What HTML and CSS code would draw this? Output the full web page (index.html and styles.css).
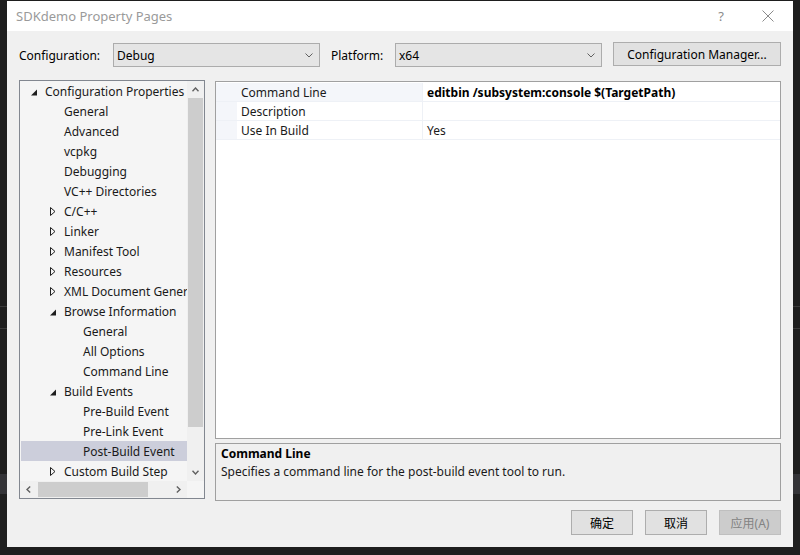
FILE: index.html
```html
<!DOCTYPE html>
<html>
<head>
<meta charset="utf-8">
<link rel="stylesheet" href="styles.css">
</head>
<body>
<div class="window">
  <div class="titlebar">
    <span class="title">SDKdemo Property Pages</span>
    <span class="help">?</span>
    <svg class="close" width="12" height="12" viewBox="0 0 12 12"><path d="M0.5 0.5L11.5 11.5M11.5 0.5L0.5 11.5" stroke="#8a8a8a" stroke-width="1" fill="none"/></svg>
  </div>
  <div class="body">
    <div class="config-row">
      <span class="lbl lbl-cfg">Configuration:</span>
      <div class="select"><span>Debug</span><svg class="chev" width="8" height="5" viewBox="0 0 8 5"><path d="M0.5 0.5L4 4L7.5 0.5" stroke="#606060" fill="none"/></svg></div>
      <span class="lbl lbl-plat">Platform:</span>
      <div class="select"><span>x64</span><svg class="chev" width="8" height="5" viewBox="0 0 8 5"><path d="M0.5 0.5L4 4L7.5 0.5" stroke="#606060" fill="none"/></svg></div>
      <div class="btn btn-mgr">Configuration Manager...</div>
    </div>
    <div class="main">
      <div class="tree">
        <div class="tree-top">
          <div class="tree-rows">
            <div class="row l0"><svg class="tw" width="6" height="9" viewBox="0 0 6 9"><path d="M6 2.5L6 8.5L0 8.5Z" fill="#1e1e1e"/></svg>Configuration Properties</div>
            <div class="row l1"><span class="tw"></span>General</div>
            <div class="row l1"><span class="tw"></span>Advanced</div>
            <div class="row l1"><span class="tw"></span>vcpkg</div>
            <div class="row l1"><span class="tw"></span>Debugging</div>
            <div class="row l1"><span class="tw"></span>VC++ Directories</div>
            <div class="row l1"><svg class="tw" width="6" height="9" viewBox="0 0 6 9"><path d="M0.5 0.5L5 4.5L0.5 8.5Z" stroke="#1e1e1e" stroke-width="1" fill="none" stroke-linejoin="miter"/></svg>C/C++</div>
            <div class="row l1"><svg class="tw" width="6" height="9" viewBox="0 0 6 9"><path d="M0.5 0.5L5 4.5L0.5 8.5Z" stroke="#1e1e1e" stroke-width="1" fill="none"/></svg>Linker</div>
            <div class="row l1"><svg class="tw" width="6" height="9" viewBox="0 0 6 9"><path d="M0.5 0.5L5 4.5L0.5 8.5Z" stroke="#1e1e1e" stroke-width="1" fill="none"/></svg>Manifest Tool</div>
            <div class="row l1"><svg class="tw" width="6" height="9" viewBox="0 0 6 9"><path d="M0.5 0.5L5 4.5L0.5 8.5Z" stroke="#1e1e1e" stroke-width="1" fill="none"/></svg>Resources</div>
            <div class="row l1"><svg class="tw" width="6" height="9" viewBox="0 0 6 9"><path d="M0.5 0.5L5 4.5L0.5 8.5Z" stroke="#1e1e1e" stroke-width="1" fill="none"/></svg>XML Document Generator</div>
            <div class="row l1"><svg class="tw" width="6" height="9" viewBox="0 0 6 9"><path d="M6 2.5L6 8.5L0 8.5Z" fill="#1e1e1e"/></svg>Browse Information</div>
            <div class="row l2"><span class="tw"></span>General</div>
            <div class="row l2"><span class="tw"></span>All Options</div>
            <div class="row l2"><span class="tw"></span>Command Line</div>
            <div class="row l1"><svg class="tw" width="6" height="9" viewBox="0 0 6 9"><path d="M6 2.5L6 8.5L0 8.5Z" fill="#1e1e1e"/></svg>Build Events</div>
            <div class="row l2"><span class="tw"></span>Pre-Build Event</div>
            <div class="row l2"><span class="tw"></span>Pre-Link Event</div>
            <div class="row l2 sel"><span class="tw"></span>Post-Build Event</div>
            <div class="row l1"><svg class="tw" width="6" height="9" viewBox="0 0 6 9"><path d="M0.5 0.5L5 4.5L0.5 8.5Z" stroke="#1e1e1e" stroke-width="1" fill="none"/></svg>Custom Build Step</div>
          </div>
          <div class="vscroll">
            <div class="sb-btn"><svg width="7" height="5" viewBox="0 0 7 5"><path d="M0.5 4.2L3.5 1L6.5 4.2" stroke="#606060" stroke-width="1.4" fill="none"/></svg></div>
            <div class="vtrack"><div class="vthumb"></div></div>
            <div class="sb-btn"><svg width="7" height="5" viewBox="0 0 7 5"><path d="M0.5 0.8L3.5 4L6.5 0.8" stroke="#606060" stroke-width="1.4" fill="none"/></svg></div>
          </div>
        </div>
        <div class="hscroll">
          <div class="hbtn"><svg width="5" height="7" viewBox="0 0 5 7"><path d="M4.2 0.5L1 3.5L4.2 6.5" stroke="#606060" stroke-width="1.4" fill="none"/></svg></div>
          <div class="htrack"><div class="hthumb"></div></div>
          <div class="hbtn"><svg width="5" height="7" viewBox="0 0 5 7"><path d="M0.8 0.5L4 3.5L0.8 6.5" stroke="#606060" stroke-width="1.4" fill="none"/></svg></div>
          <div class="corner"></div>
        </div>
      </div>
      <div class="right">
        <div class="grid">
          <div class="grow">
            <div class="strip"></div>
            <div class="gname gsel">Command Line</div>
            <div class="gval bold">editbin /subsystem:console $(TargetPath)</div>
          </div>
          <div class="grow">
            <div class="strip"></div>
            <div class="gname">Description</div>
            <div class="gval"></div>
          </div>
          <div class="grow">
            <div class="strip"></div>
            <div class="gname">Use In Build</div>
            <div class="gval">Yes</div>
          </div>
        </div>
        <div class="desc">
          <div class="desc-title">Command Line</div>
          <div class="desc-text">Specifies a command line for the post-build event tool to run.</div>
        </div>
      </div>
    </div>
    <div class="buttons">
      <div class="btn btn-dlg">确定</div>
      <div class="btn btn-dlg">取消</div>
      <div class="btn btn-dlg disabled">应用(A)</div>
    </div>
  </div>
</div>
</body>
</html>
```

FILE: styles.css
```css
html, body {
  margin: 0;
  padding: 0;
}
body {
  width: 800px;
  height: 555px;
  overflow: hidden;
  background:
    linear-gradient(to bottom, transparent 306px, #3a3a3a 306px, #3a3a3a 307px, transparent 307px, transparent 328px, #3a3a3a 328px, #3a3a3a 329px, transparent 329px, transparent 474px, #333337 474px, #333337 494px, transparent 494px),
    #1e1e1e;
  font-family: "Noto Sans", "Noto Sans CJK SC", sans-serif;
  font-size: 12px;
  color: #000;
}
.window {
  margin: 1px 0 0 7px;
  width: 786px;
  height: 546px;
  background: #f0f0f0;
  display: flex;
  flex-direction: column;
}
.titlebar {
  height: 30px;
  background: #fff;
  display: flex;
  align-items: center;
  padding-left: 9px;
  flex-shrink: 0;
}
.title {
  font-size: 13px;
  color: #9a9a9a;
  flex: 1;
}
.help {
  font-size: 13px;
  color: #8a8a8a;
  margin-right: 38px;
}
.close {
  margin-right: 19px;
}
.body {
  flex: 1;
  display: flex;
  flex-direction: column;
  padding: 12px 12px 0 12px;
}
.config-row {
  display: flex;
  align-items: center;
  height: 24px;
}
.lbl {
  flex-shrink: 0;
}
.lbl-cfg { width: 94px; }
.lbl-plat { width: 64px; margin-left: 11px; }
.select {
  box-sizing: border-box;
  width: 207px;
  height: 24px;
  background: #e5e5e5;
  border: 1px solid #acacac;
  display: flex;
  align-items: center;
  justify-content: space-between;
  padding: 0 6px 0 3px;
}
.chev { margin-top: 1px; }
.btn {
  box-sizing: border-box;
  background: #e1e1e1;
  border: 1px solid #adadad;
  display: flex;
  align-items: center;
  justify-content: center;
}
.btn-mgr {
  width: 168px;
  height: 24px;
  margin-left: 11px;
  margin-top: -2px;
}
.main {
  display: flex;
  margin-top: 13px;
  gap: 10px;
}
.tree {
  box-sizing: border-box;
  width: 186px;
  height: 419px;
  border: 1px solid #828790;
  background: #f5f5f5;
  display: flex;
  flex-direction: column;
}
.tree-top {
  flex: 1;
  display: flex;
  min-height: 0;
}
.tree-rows {
  flex: 1;
  overflow: hidden;
  min-width: 0;
}
.row {
  height: 20px;
  display: flex;
  align-items: center;
  white-space: nowrap;
  color: #1a1a1a;
}
.tw {
  display: block;
  width: 6px;
  height: 9px;
  margin-right: 8px;
  flex-shrink: 0;
}
.l0 .tw { margin-left: 11px; }
.l1 .tw { margin-left: 30px; }
.l2 .tw { margin-left: 49px; }
.row.sel { background: #cccedb; margin-left: 1px; }
.row.sel .tw { margin-left: 48px; }
.vscroll {
  width: 17px;
  background: #f0f0f0;
  display: flex;
  flex-direction: column;
  flex-shrink: 0;
}
.sb-btn {
  height: 17px;
  display: flex;
  align-items: center;
  justify-content: center;
  flex-shrink: 0;
}
.vtrack {
  flex: 1;
}
.vthumb {
  margin: 0 1px;
  height: 329px;
  background: #cdcdcd;
}
.hscroll {
  height: 17px;
  display: flex;
  background: #f0f0f0;
  flex-shrink: 0;
}
.hbtn {
  width: 17px;
  display: flex;
  align-items: center;
  justify-content: center;
  flex-shrink: 0;
}
.htrack {
  flex: 1;
  display: flex;
  align-items: stretch;
  padding: 1px 0;
}
.hthumb {
  width: 110px;
  margin-left: 1px;
  background: #cdcdcd;
}
.corner {
  width: 17px;
  background: #f5f5f5;
  flex-shrink: 0;
}
.right {
  width: 566px;
  margin-top: 1px;
  display: flex;
  flex-direction: column;
  gap: 4px;
}
.grid {
  box-sizing: border-box;
  height: 358px;
  border: 1px solid #a0a0a0;
  background: #fff;
  padding-top: 1px;
}
.grow {
  display: flex;
  height: 19px;
  box-sizing: border-box;
  border-bottom: 1px solid #eef1f6;
}
.strip {
  width: 21px;
  background: #f4f6fa;
  flex-shrink: 0;
}
.gname {
  width: 186px;
  box-sizing: border-box;
  padding-left: 4px;
  border-right: 1px solid #eef1f6;
  display: flex;
  align-items: center;
  color: #1a1a1a;
}
.gsel { background: #f4f6fa; }
.gval {
  flex: 1;
  padding-left: 4px;
  display: flex;
  align-items: center;
  white-space: nowrap;
  color: #1a1a1a;
}
.bold { font-weight: bold; color: #000; }
.desc {
  box-sizing: border-box;
  height: 58px;
  border: 1px solid #a0a0a0;
  background: #f0f0f0;
  padding: 1px 5px;
}
.desc-title { font-weight: bold; height: 18px; line-height: 18px; }
.desc-text { height: 18px; line-height: 18px; color: #1a1a1a; }
.buttons {
  display: flex;
  justify-content: flex-end;
  gap: 12px;
  margin-top: 9px;
}
.btn-dlg {
  width: 62px;
  height: 25px;
  font-size: 12px;
}
.btn-dlg.disabled {
  background: #cccccc;
  border-color: #bfbfbf;
  color: #838383;
}
```
